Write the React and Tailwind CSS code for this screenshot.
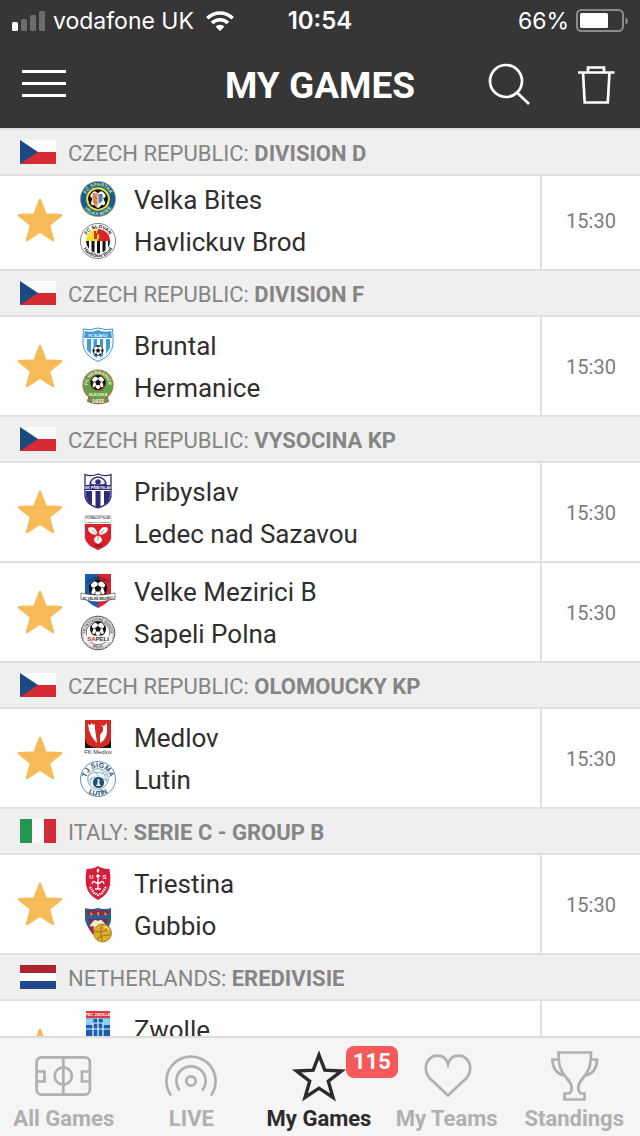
import { useId, useState } from 'react';

/* ---------- flags ---------- */

function CzechFlag() {
  return (
    <svg className="h-6 w-9" viewBox="0 0 36 24" aria-hidden="true">
      <rect width="36" height="12" fill="#fbfbfb" />
      <rect y="12" width="36" height="12" fill="#d72b33" />
      <path d="M0 0 18 12 0 24Z" fill="#1c4a80" />
    </svg>
  );
}

function ItalyFlag() {
  return (
    <svg className="h-6 w-9" viewBox="0 0 36 24" aria-hidden="true">
      <rect width="36" height="24" fill="#fafafa" />
      <rect width="12" height="24" fill="#239653" />
      <rect x="24" width="12" height="24" fill="#d12b37" />
    </svg>
  );
}

function NetherlandsFlag() {
  return (
    <svg className="h-6 w-9" viewBox="0 0 36 24" aria-hidden="true">
      <rect width="36" height="24" fill="#fff" />
      <rect width="36" height="8" fill="#ad262f" />
      <rect y="16" width="36" height="8" fill="#22488c" />
    </svg>
  );
}

/* ---------- crests ---------- */

function Ball({ cx, cy, r }) {
  return (
    <g transform={`translate(${cx} ${cy}) scale(${r / 10})`}>
      <circle r="10" fill="#fff" stroke="#111" strokeWidth="1.2" />
      <path d="M0-4.2 4 -1.3 2.5 3.4 -2.5 3.4 -4 -1.3Z" fill="#111" />
      <path d="M-3.5-9.2 0-7.4 3.5-9.2ZM9.3-3.5 7 0 8.6 4.6 10 0ZM-9.3-3.5-7 0-8.6 4.6-10 0ZM6 7.8 3.6 7 1.5 9.7ZM-6 7.8-3.6 7-1.5 9.7Z" fill="#111" stroke="#111" strokeWidth="1.4" />
      <path d="M0-4.2V-8M4-1.3 7.5-.3M-4-1.3-7.5-.3M2.5 3.4 4.5 7M-2.5 3.4-4.5 7" stroke="#111" strokeWidth=".8" />
    </g>
  );
}

function RingText({ top, bottom, color, size = 4.6, r = 13, cy = 18 }) {
  const id = useId();
  const low = r + size * 0.72;
  return (
    <g fill={color} fontFamily="Liberation Sans, sans-serif" fontWeight="700" fontSize={size} textAnchor="middle">
      <path id={`${id}t`} d={`M${18 - r} ${cy}A${r} ${r} 0 0 1 ${18 + r} ${cy}`} fill="none" />
      <text><textPath href={`#${id}t`} startOffset="50%">{top}</textPath></text>
      {bottom && (
        <>
          <path id={`${id}b`} d={`M${18 - low} ${cy}A${low} ${low} 0 0 0 ${18 + low} ${cy}`} fill="none" />
          <text><textPath href={`#${id}b`} startOffset="50%">{bottom}</textPath></text>
        </>
      )}
    </g>
  );
}

function Label({ x = 18, y, size, color, children }) {
  return (
    <text x={x} y={y} fontSize={size} fill={color} textAnchor="middle" fontWeight="700" fontFamily="Liberation Sans, sans-serif">
      {children}
    </text>
  );
}

function Crest({ children }) {
  return <svg className="size-9" viewBox="0 0 36 36" aria-hidden="true">{children}</svg>;
}

const crests = {
  bites: (
    <Crest>
      <circle cx="18" cy="18" r="17.6" fill="#1b5d97" stroke="#9cab5a" strokeWidth=".7" />
      <circle cx="18" cy="18" r="11.8" fill="#f3e03a" />
      <Ball cx={18} cy={18} r={9.2} />
      <path d="M12.5 12H23V20Q22 25 18 27Q13 24 12.5 19Z" fill="#f4f4ee" />
      <path d="M12.5 12H17.5V26Q13 24 12.5 19Z" fill="#dc9057" />
      <path d="M18.5 13H22.5V20L18.5 23Z" fill="#4f84b6" />
      <path d="M14 15 17 18M14 20 17 22M19 16 22 14" stroke="#a44c34" strokeWidth="1" />
      <RingText top="FC SPARTAK" bottom="VELKÁ BÍTEŠ" color="#d7e58e" size={4.8} />
    </Crest>
  ),
  brod: (
    <Crest>
      <circle cx="18" cy="18" r="17.6" fill="#fff" stroke="#333" strokeWidth=".6" />
      <path d="M6 18A12 12 0 0 1 18 6V18Z" fill="#f5dd32" />
      <path d="M18 6A12 12 0 0 1 30 18H18Z" fill="#df2027" />
      <path d="M14 8V16H22V8H20V10H19V8H17V10H16V8Z" fill="#c8322b" />
      <path d="M17 11.5H19V16H17Z" fill="#f4d232" />
      <path d="M6 18H30A12 12 0 0 1 6 18Z" fill="#fff" />
      <path d="M6 18H9V26Q6 22 6 18ZM11.5 18H14.5V29.4L11.5 28ZM17 18H20V30H17ZM22.5 18H25.5V27.5L22.5 29.3ZM28 18H30Q30 22 28 24.6Z" fill="#111" />
      <RingText top="FC SLOVAN" bottom="Havlíčkův Brod" color="#111" size={4.8} r={12.8} />
    </Crest>
  ),
  bruntal: (
    <Crest>
      <path d="M3 2Q10 4 18 1Q26 4 33 2Q31 5 33 8V17Q32 29 18 34.5Q4 29 3 17V8Q5 5 3 2Z" fill="#fff" stroke="#4294ca" />
      <path d="M5 4Q12 6 18 3Q24 6 31 4L32 11H4Z" fill="#429bd2" />
      <path d="M7 12H11V27L7 23ZM13.5 12H17V31L13.5 29ZM20 12H23V29L20 31ZM26 12H30V21L26 27Z" fill="#3d9cd6" />
      <Label y={9.5} size={3.4} color="#fff">FC SLAVOJ</Label>
      <Ball cx={18} cy={23.5} r={5} />
    </Crest>
  ),
  hermanice: (
    <Crest>
      <path d="M9 27H27L28.5 32.5Q18 37 7.5 32.5Z" fill="#5d9e48" stroke="#b55135" strokeWidth="1" />
      <circle cx="18" cy="16" r="15" fill="#5da44c" stroke="#c4603f" strokeWidth="1.1" />
      <circle cx="18" cy="14" r="8.4" fill="#a55a33" />
      <Ball cx={18} cy={13.5} r={7} />
      <RingText top="FC HEŘMANICE" color="#f0f5dc" size={4.4} r={10.4} cy={15.5} />
      <Label y={26.5} size={4} color="#f0f5dc">SLEZSKÁ</Label>
      <Label y={33.5} size={5.4} color="#fff">1932</Label>
    </Crest>
  ),
  pribyslav: (
    <Crest>
      <path d="M5 1.5Q11 4 18 1Q25 4 31 1.5V22Q31 31 18 35Q5 31 5 22Z" fill="#fff" stroke="#2c2a7b" strokeWidth="1.3" />
      <path d="M10 12A8 8 0 0 1 26 12Z" fill="#eef" stroke="#2c2a7b" strokeWidth="1.4" />
      <path d="M15 8 18 6 21 8 20 11H16ZM11 10 13 12H11ZM25 10 23 12H25Z" fill="#2c2a7b" />
      <path d="M6 18H12V31.5Q6 29 6 22ZM24 18H30V22Q30 29 24 31.5ZM15.5 18H20.5V34L18 34.8 15.5 34Z" fill="#2c2a7b" />
      <rect x="5" y="12" width="26" height="5" fill="#2c2a7b" />
      <Label y={16} size={3.6} color="#fff">SK PŘIBYSLAV</Label>
    </Crest>
  ),
  ledec: (
    <Crest>
      <path d="M5 .5H31V23Q30 30 18 35Q6 30 5 23Z" fill="#fff" stroke="#b4b4bc" strokeWidth=".7" />
      <path d="M5 9H31V23Q30 30 18 35Q6 30 5 23Z" fill="#dc202a" />
      <path d="M18 20Q8 20 8 13Q15 9 18 20Q21 9 28 13Q28 20 18 20Q26 25 18 29Q10 25 18 20Z" fill="#fff" />
      <path d="M18 20 12 15M18 20 24 15M18 20V26" stroke="#dc5a5f" strokeWidth=".8" />
      <circle cx="18" cy="19.5" r="1.4" fill="#dc202a" />
      <Label y={4.2} size={2.6} color="#444">FOTBALOVÝ KLUB</Label>
      <Label y={7.5} size={2.4} color="#444">LEDEČ N. SÁZAVOU</Label>
      <Label y={32} size={3} color="#5c1116">1919</Label>
    </Crest>
  ),
  mezirici: (
    <Crest>
      <path d="M5 1H18V35Q6 30 5 22Z" fill="#165eb3" />
      <path d="M31 1H18V35Q30 30 31 22Z" fill="#dd2430" />
      <RingText top="FOTBALOVÝ" color="#222" size={3.6} r={12} />
      <Ball cx={18} cy={15.5} r={8.5} />
      <path d="M1 20Q18 24 35 20V26.500Q32 25.500 30 27Q18 31 6 27Q4 25.500 1 26.500Z" fill="#fff" stroke="#333" strokeWidth=".6" />
      <Label y={27} size={3.2} color="#222">FC VELKÉ MEZIŘÍČÍ</Label>
    </Crest>
  ),
  polna: (
    <Crest>
      <circle cx="18" cy="18" r="16.8" fill="#e9e9e9" stroke="#555" strokeWidth="1" />
      <circle cx="18" cy="18" r="15.6" fill="none" stroke="#888" strokeWidth=".5" />
      <circle cx="18" cy="18" r="11.8" fill="#fff" stroke="#555" strokeWidth=".8" />
      <Ball cx={18} cy={14} r={7.4} />
      <RingText top="TĚLOVÝCHOVNÁ JEDNOTA" bottom="POLNÁ" color="#333" size={3} r={12.6} />
      <path d="M4 20.5H32V27H4Z" fill="#f4f4f4" />
      <Label y={26} size={6} color="#333"><tspan fill="#c22c36">SA</tspan>PELI</Label>
    </Crest>
  ),
  medlov: (
    <Crest>
      <rect x="5" y="1" width="26" height="28" fill="#171313" />
      <path d="M5 1H31V20Q30 28 18 29Q6 28 5 20Z" fill="#d32a26" />
      <path d="M8 5 10 6 12 4 13 6 15 5V10L17 24Q9 17 8 5ZM27 4V13Q26 21 20 24V16L23 12V8L21 6 24 7Z" fill="#fff" />
      <text x="18" y="34.8" fontSize="5.8" fill="#333" textAnchor="middle" fontFamily="Liberation Sans, sans-serif">FK Medlov</text>
    </Crest>
  ),
  lutin: (
    <Crest>
      <circle cx="18" cy="18" r="17.5" fill="#fff" stroke="#3c718e" strokeWidth=".8" />
      <circle cx="18" cy="18" r="10.4" fill="#f4f8fa" stroke="#6e98ae" strokeWidth=".8" />
      <path d="M8.500 15Q14 8 27 14M8 20Q13 13 27 19M13 9.500Q19 13 19 20M20 8Q25 12 27 21M10 24Q10 20 12 17" fill="none" stroke="#7fa3b7" strokeWidth=".8" />
      <circle cx="18.500" cy="21.500" r="5.600" fill="#1c4f70" />
      <path d="M17.500 18H19.500V22L21 25H16L17.500 22Z" fill="#d9e6ee" />
      <RingText top="TJ SIGMA" bottom="LUTÍN" color="#1f506e" size={7} r={11.6} />
    </Crest>
  ),
  triestina: (
    <Crest>
      <path d="M18 1Q22 4 29.500 4Q31 12 30 20Q28 30 18 35Q8 30 6 20Q5 12 6.500 4Q14 4 18 1Z" fill="#d61d39" />
      <path d="M18 3 19.500 5.500 18 8 16.500 5.500Z" fill="#fff" />
      <path d="M18 9V24M12 19Q13 15 15 17Q16 19 18 17Q20 19 21 17Q23 15 24 19M15 24H21M16 11H20" fill="none" stroke="#fff" strokeWidth="1.300" />
      <Label x={11.5} y={14} size={6} color="#fff">U</Label>
      <Label x={24.5} y={14} size={6} color="#fff">S</Label>
      <path d="M10 22 14 28 18 30 22 28 26 22" fill="none" stroke="#fff" strokeWidth="2.400" strokeDasharray="1.300 .900" />
    </Crest>
  ),
  gubbio: (
    <Crest>
      <path d="M5 1Q11 3 18 1Q25 3 31 1V14Q28 25 18 31Q8 24 5 13Z" fill="#2d5f97" />
      <path d="M7 3Q12 4.500 18 3Q24 4.500 29 3V8H7Z" fill="#982643" />
      <path d="M8 12H28L26 18H10Z" fill="#7e294f" />
      <path d="M10 5 13 7 11 9ZM17 5 20 6 18 9ZM24 5 27 7 25 9Z" fill="#cfad48" />
      <path d="M10 18 13 14.500Q15 12 18 14Q21 12 23 14.500L26 18 24 23H13Z" fill="#eff0c8" />
      <path d="M8 20 14 19 13 28Z" fill="#a92c40" />
      <circle cx="22.5" cy="26" r="9" fill="#e0ac26" stroke="#a3741c" strokeWidth=".8" />
      <path d="M14 24Q22 27 30 21M17 32Q23 27 31 28M22 17.500Q19 25 22 34" fill="none" stroke="#96701f" strokeWidth=".9" />
      <path d="M24 20Q28 20 29 23" fill="none" stroke="#f7de7b" strokeWidth="1.5" />
    </Crest>
  ),
  zwolle: (
    <Crest>
      <rect x="6" y="0" width="24" height="7" fill="#e33a3f" />
      <rect x="6" y="7" width="24" height="28" fill="#6dbde9" />
      <path d="M13.500 8H22.500V14H30V34H6V14H13.500Z" fill="#1c5eae" />
      <path d="M6 8H13V14H6ZM23 8H30V14H23Z" fill="#8fd0f2" />
      <path d="M18 7V34M6 18H30M6 26H30M13 12V34M23 12V34M13.500 12H22.500" stroke="#e8f5fc" strokeWidth="1.200" />
      <Label y={5} size={3.8} color="#fff">PEC ZWOLLE</Label>
    </Crest>
  ),
};

/* ---------- tab icons ---------- */

function TabIcon({ width = 2.7, children }) {
  return (
    <svg className="h-14 w-16" viewBox="0 0 64 56" fill="none" stroke="currentColor" strokeWidth={width} aria-hidden="true">
      {children}
    </svg>
  );
}

const tabs = [
  {
    name: 'All Games',
    icon: (
      <TabIcon>
        <rect x="4.6" y="9.3" width="53.3" height="37.3" rx="5" />
        <circle cx="31.3" cy="28" r="8.6" />
        <path d="M31.300 9V47M5 23.500H12.500V33.500H5M57.500 23.500H50V33.500H57.500" />
      </TabIcon>
    ),
  },
  {
    name: 'LIVE',
    icon: (
      <TabIcon>
        <circle cx="32" cy="33" r="4.7" />
        <path d="M20.800 42.300A14.600 14.600 0 1 1 43.200 42.300M12 47.500A24.600 24.600 0 1 1 52 47.500" />
      </TabIcon>
    ),
  },
  {
    name: 'My Games',
    count: 115,
    icon: (
      <TabIcon width={3.4}>
        <path d="M32 7 37.800 22.200 54.500 23 41.300 33.200 46 49.500 32 40.200 18 49.500 22.700 33.200 9.500 23 26.200 22.200Z" />
      </TabIcon>
    ),
  },
  {
    name: 'My Teams',
    icon: (
      <TabIcon>
        <path d="M33 47.500 15 30.500C11 26.500 10.800 22 10.800 20C10.800 13 16 7.700 22 7.700C27.500 7.700 31.500 10.500 33 16C34.500 10.500 38.500 7.700 44 7.700C50 7.700 55.200 13 55.200 20C55.200 22 55 26.500 51 30.500Z" />
      </TabIcon>
    ),
  },
  {
    name: 'Standings',
    icon: (
      <TabIcon>
        <path d="M16.500 4.500H49C49 18 47 23 41 30C37.500 34 36.300 36 36.300 40Q36.300 44 39 45.500H42.500V51.500H22.500V45.500H27Q29.700 44 29.700 40C29.700 36 28 34 24.500 30C18.500 23 16.500 18 16.500 4.500Z" />
        <path d="M16.500 11.500H10.500C10.500 20 13.500 25 21.500 27.500M49 11.500H55C55 20 52 25 44 27.500" />
      </TabIcon>
    ),
  },
];

/* ---------- data ---------- */

const leagues = [
  {
    country: 'CZECH REPUBLIC', league: 'DIVISION D', flag: <CzechFlag />,
    games: [{ home: 'Velka Bites', away: 'Havlickuv Brod', crests: ['bites', 'brod'], time: '15:30' }],
  },
  {
    country: 'CZECH REPUBLIC', league: 'DIVISION F', flag: <CzechFlag />,
    games: [{ home: 'Bruntal', away: 'Hermanice', crests: ['bruntal', 'hermanice'], time: '15:30' }],
  },
  {
    country: 'CZECH REPUBLIC', league: 'VYSOCINA KP', flag: <CzechFlag />,
    games: [
      { home: 'Pribyslav', away: 'Ledec nad Sazavou', crests: ['pribyslav', 'ledec'], time: '15:30' },
      { home: 'Velke Mezirici B', away: 'Sapeli Polna', crests: ['mezirici', 'polna'], time: '15:30' },
    ],
  },
  {
    country: 'CZECH REPUBLIC', league: 'OLOMOUCKY KP', flag: <CzechFlag />,
    games: [{ home: 'Medlov', away: 'Lutin', crests: ['medlov', 'lutin'], time: '15:30' }],
  },
  {
    country: 'ITALY', league: 'SERIE C - GROUP B', flag: <ItalyFlag />,
    games: [{ home: 'Triestina', away: 'Gubbio', crests: ['triestina', 'gubbio'], time: '15:30' }],
  },
  {
    country: 'NETHERLANDS', league: 'EREDIVISIE', flag: <NetherlandsFlag />,
    games: [{ home: 'Zwolle', crests: ['zwolle'] }],
  },
];

/* ---------- components ---------- */

function StatusBar() {
  return (
    <div className="grid h-10 grid-cols-[1fr_auto_1fr] items-center px-3 pt-0.5 font-['Inter',sans-serif] text-[23px] text-white">
      <div className="flex items-center gap-2">
        <svg className="h-5 w-[33px]" viewBox="0 0 33 20" aria-hidden="true">
          <rect y="11" width="6" height="9" rx="1.5" fill="#fff" />
          <g fill="#6c6c6c">
            <rect x="9" y="8" width="6" height="12" rx="1.5" />
            <rect x="18" y="4" width="6" height="16" rx="1.5" />
            <rect x="27" width="6" height="20" rx="1.5" />
          </g>
        </svg>
        <span>vodafone UK</span>
        <svg className="ml-1 h-5 w-7" viewBox="0 0 28 20" fill="none" stroke="#fff" strokeWidth="3.6" aria-hidden="true">
          <path d="M1.300 7.200A18 18 0 0 1 26.700 7.200M6 12A11.300 11.300 0 0 1 22 12" />
          <path d="M14 20 9.500 15.500A6.400 6.400 0 0 1 18.500 15.500Z" fill="#fff" stroke="none" />
        </svg>
      </div>
      <span className="text-2xl font-semibold">10:54</span>
      <div className="flex items-center justify-end gap-1.5">
        <span>66%</span>
        <svg className="h-6 w-[53px]" viewBox="0 0 53 24" aria-hidden="true">
          <rect x="2" y="1" width="46" height="21" rx="4.5" fill="none" stroke="#8b8b8b" strokeWidth="2" />
          <rect x="5" y="4" width="28" height="15" rx="1.5" fill="#fff" />
          <path d="M50.500 8Q53 9.500 53 12T50.500 16Z" fill="#8b8b8b" />
        </svg>
      </div>
    </div>
  );
}

function TitleBar() {
  return (
    <div className="grid h-22 grid-cols-[1fr_auto_1fr] items-center px-[22px] text-white">
      <button type="button" aria-label="Menu" className="w-11">
        <svg className="h-7 w-11" viewBox="0 0 44 28" stroke="#fff" strokeWidth="2.8" aria-hidden="true">
          <path d="M0 1.500H44M0 13.500H44M0 25.500H44" />
        </svg>
      </button>
      <h1 className="pt-0.5 text-[37px] leading-none font-bold">MY GAMES</h1>
      <div className="flex items-center justify-end gap-[46px]">
        <button type="button" aria-label="Search">
          <svg className="h-11 w-11" viewBox="0 0 44 44" fill="none" stroke="#fff" strokeWidth="2.7" aria-hidden="true">
            <circle cx="18" cy="19" r="16" />
            <path d="M29 30.500 41 42" />
          </svg>
        </button>
        <button type="button" aria-label="Delete">
          <svg className="h-11 w-10" viewBox="0 0 40 44" fill="none" stroke="#fff" strokeWidth="2.7" aria-hidden="true">
            <path d="M0 10.500H36.500M10 10V5.500H26V10M5 10.500 6.700 40.500H29.800L31.500 10.500" />
          </svg>
        </button>
      </div>
    </div>
  );
}

function Game({ game, first }) {
  const [starred, setStarred] = useState(true);

  return (
    <li className={`flex bg-white ${first ? '-mt-[5px]' : ''}`}>
      <button
        type="button"
        aria-label={`Favourite ${game.home}`}
        aria-pressed={starred}
        onClick={() => setStarred(!starred)}
        className="flex w-20 shrink-0 items-center justify-center"
      >
        <svg className="h-11 w-[46px]" viewBox="0 0 46 44" aria-hidden="true">
          <path
            d="M23 2 28.500 16.500 44 17.300 31.900 27 36 42 23 33.500 10 42 14.100 27 2 17.300 17.500 16.500Z"
            fill={starred ? '#f6bb57' : 'none'}
            stroke="#f6bb57"
            strokeWidth="2.5"
            strokeLinejoin="round"
          />
        </svg>
      </button>
      <div className="min-w-0 flex-1 py-[7px] text-[26px] text-[#2f2f2f]">
        <div className="flex h-[42px] items-center gap-[18px]">
          {crests[game.crests[0]]}
          <span className="truncate pt-0.5">{game.home}</span>
        </div>
        <div className="flex h-[42px] items-center gap-[18px]">
          {crests[game.crests[1]]}
          <span className="truncate pt-0.5">{game.away}</span>
        </div>
      </div>
      <div className="flex w-[100px] shrink-0 items-center justify-center border-l-2 border-[#e0e0e0] pt-0.5 text-xl text-[#7d7d7d]">
        {game.time}
      </div>
    </li>
  );
}

function League({ data, first }) {
  return (
    <section>
      <h2 className="relative z-10 flex h-12 items-center gap-3 border-y-2 border-[#e0e0e0] bg-[#efefef] px-5 text-[22px] text-[#858585]">
        {data.flag}
        <span className="pt-0.5">
          {data.country}: <b className="font-bold">{data.league}</b>
        </span>
      </h2>
      <ul className="divide-y-2 divide-[#e0e0e0]">
        {data.games.map((game) => (
          <Game key={game.home} game={game} first={first} />
        ))}
      </ul>
    </section>
  );
}

function TabBar() {
  const [active, setActive] = useState('My Games');

  return (
    <nav className="grid h-25 shrink-0 grid-cols-5 border-t-2 border-[#dcdcdc] bg-[#f5f5f5] pr-0.5">
      {tabs.map((tab) => (
        <button
          key={tab.name}
          type="button"
          onClick={() => setActive(tab.name)}
          className={`flex flex-col items-center pt-2.5 text-[22px] leading-[30px] font-bold whitespace-nowrap ${active === tab.name ? 'text-[#2b2b2b]' : 'text-[#b0b0b0]'}`}
        >
          <span className="relative">
            {tab.icon}
            {tab.count && (
              <span className="absolute -top-0.5 left-[59px] rounded-lg bg-[#f5595a] px-[7px] leading-8 text-white">{tab.count}</span>
            )}
          </span>
          {tab.name}
        </button>
      ))}
    </nav>
  );
}

function App() {
  return (
    <div className="flex h-screen flex-col overflow-hidden bg-white font-['Roboto',sans-serif]">
      <header className="shrink-0 bg-[#363636]">
        <StatusBar />
        <TitleBar />
      </header>
      <main className="min-h-0 flex-1 overflow-y-auto [scrollbar-width:none]">
        {leagues.map((data, i) => (
          <League key={data.country + data.league} data={data} first={i === 0} />
        ))}
      </main>
      <TabBar />
    </div>
  );
}

export default App;
